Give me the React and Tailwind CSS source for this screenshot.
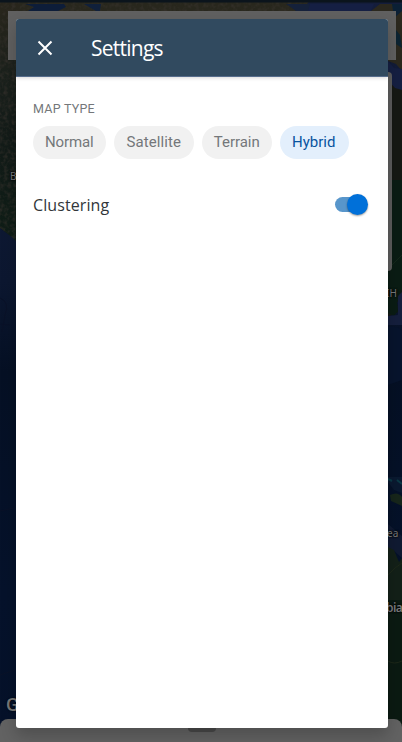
const mapLabel = 'absolute whitespace-nowrap font-["Noto_Sans",sans-serif] text-[#77797a] [text-shadow:0_0_2px_#000,0_0_2px_#000] leading-none';

function MapBackdrop() {
  return (
    <svg className="absolute inset-0" width="402" height="742" viewBox="0 0 402 742">
      <defs>
        <linearGradient id="sea" x1="0" y1="0" x2="0" y2="1">
          <stop offset="0" stopColor="#141d3b" />
          <stop offset="0.38" stopColor="#0c1730" />
          <stop offset="0.5" stopColor="#051024" />
          <stop offset="0.8" stopColor="#05122b" />
          <stop offset="1" stopColor="#051129" />
        </linearGradient>
        <linearGradient id="land" x1="0" y1="0" x2="0" y2="1">
          <stop offset="0" stopColor="#29261c" />
          <stop offset="0.3" stopColor="#1b211c" />
          <stop offset="0.55" stopColor="#131b18" />
          <stop offset="1" stopColor="#0e1d16" />
        </linearGradient>
        <filter id="terrain" x="0" y="0" width="1" height="1" colorInterpolationFilters="sRGB">
          <feTurbulence type="fractalNoise" baseFrequency="0.25" numOctaves="3" seed="4" />
          <feColorMatrix values="0 0 0 0 0.22  0 0 0 0 0.2  0 0 0 0 0.18  1.5 0 0 0 -0.62" />
          <feComposite in2="SourceGraphic" operator="in" result="grain" />
          <feMerge>
            <feMergeNode in="SourceGraphic" />
            <feMergeNode in="grain" />
          </feMerge>
        </filter>
      </defs>
      <rect width="402" height="742" fill="url(#sea)" />
      <g filter="url(#terrain)">
        <path d="M0 0H310L302 11H0Z" fill="#28271d" />
        <path d="M0 0H20V245L13 238L0 228Z" fill="url(#land)" />
      </g>
      <path d="M25 4H64L66 7L58 11H28L34 7Z" fill="#0d1d39" />
      <path d="M84 4L101 4L100 11H96Z" fill="#10203b" />
      <path d="M286 4L292 8L296 11H310V4Z" fill="#15213a" />
      <path d="M310 4H374L371 11H308Z" fill="#151f43" />
      <path d="M371 11L380 4H402V71L396 64L388 61V11Z" fill="#2b281e" />
      <path d="M392 4H402V11L394 18Z" fill="#0b2035" />
      <path d="M396 30L400 35L402 48L396 44Z" fill="#0c2331" />
      <path d="M388 61L394 68L402 69V91L394 90L388 80Z" fill="#151f42" />
      <path d="M388 80L395 88L402 90V292L397 303L398 312L388 317Z" fill="#161914" />
      <path d="M388 180H402V291L397 302L398 311L394 316L388 313Z" fill="#0a1c14" />
      <path d="M388 269L402 255" stroke="#14271a" fill="none" />
      <path d="M398 296L402 292V325H388V316L398 315Z" fill="#151f3d" />
      <path d="M388 327Q398 326 402 331V380L388 385Z" fill="#07142d" />
      <path d="M388 477H402V493L394 490L388 482Z" fill="#0a1930" />
      <path d="M388 479L392 481M397 480L402 484" stroke="#0b3946" strokeWidth="2" />
      <path d="M390 495Q398 491 402 497V506L391 501Z" fill="#17261b" />
      <path d="M388 524L402 536V558L394 551L388 553Z" fill="#101a32" />
      <path d="M388 547L394 550L399 562L402 558V742H388Z" fill="#132018" />
      <path d="M388 600H402V742H388Z" fill="#0b1a12" />
      <path d="M388 575L395 568L402 563M388 661Q394 665 402 661" stroke="#1d2819" fill="none" />
      <path d="M0 298Q10 302 5 315L2 332M0 324L10 325M0 511L14 508M0 675L15 670" stroke="#0a1228" fill="none" />
      <rect width="402" height="2.5" fill="#0b141c" />
    </svg>
  );
}

function Chip({ label, selected, size }) {
  return (
    <button
      className={`flex h-[33px] shrink-0 items-center justify-center rounded-full font-[Roboto,sans-serif] text-[15px] ${size} ${
        selected ? "bg-[#e3effc] text-[#0854a0]" : "bg-[#f1f1f1] text-[#74777a]"
      }`}
    >
      {label}
    </button>
  );
}

export default function App() {
  return (
    <div className='relative h-[742px] w-[402px] overflow-hidden bg-[#051029] px-4 pt-[19px] font-["Open_Sans",sans-serif]'>
      <MapBackdrop />
      <div className="absolute left-2 top-[11px] h-[49px] w-[388px] bg-[#606060]" />
      <div className="absolute left-[360px] top-[72px] h-[199px] w-8 rounded-[4px] bg-[#5c5c5c]" />
      <span className={`${mapLabel} left-[10px] top-[171px] text-[10px]`}>B</span>
      <span className={`${mapLabel} left-[386px] top-[288px] text-[10px]`}>IH</span>
      <span className={`${mapLabel} left-[387px] top-[528px] text-[10px]`}>ea</span>
      <span className={`${mapLabel} left-[386px] top-[602px] text-[12px] font-semibold tracking-[-0.6px]`}>bia</span>
      <span className="absolute left-[6px] top-[695px] font-[Roboto,sans-serif] text-[19px] font-medium leading-none text-[#777] [text-shadow:0_0_2px_#000]">G</span>
      <div className="absolute bottom-0 left-0 h-[23px] w-full rounded-t-[8px] bg-[#626262]" />
      <div className="absolute left-[188px] top-[727px] h-[5px] w-7 rounded-b-sm bg-[#484848]" />

      <section className="relative h-[709px] w-[372px] overflow-hidden rounded-[3px] bg-white shadow-[0_8px_16px_rgba(0,0,0,0.2)]">
        <header className="flex h-[58px] items-center border-b border-[#566c8b] bg-[#314a5f] shadow-[0_1px_4px_rgba(0,0,0,0.16)]">
          <button aria-label="Close" className="ml-[21px] flex size-4 items-center justify-center">
            <svg width="16" height="16" viewBox="0 0 16 16" fill="none" stroke="white" strokeWidth="2">
              <path d="M1.5 1.5L14.5 14.5M14.5 1.5L1.5 14.5" />
            </svg>
          </button>
          <h1 className="ml-[38px] text-[21px] leading-7 tracking-[-0.75px] text-white [font-stretch:92%]">Settings</h1>
        </header>
        <main className="px-[17px] pt-[23px]">
          <h2 className="h-[18px] font-[Roboto,sans-serif] text-[12.5px] leading-[18px] tracking-[0.25px] text-[#74777a]">MAP TYPE</h2>
          <div className="mt-2 flex gap-[8.5px]">
            <Chip label="Normal" size="w-[72.5px] tracking-[-0.1px]" />
            <Chip label="Satellite" size="w-[79.5px] tracking-[0.1px]" />
            <Chip label="Terrain" size="w-[69.5px] tracking-[-0.05px]" />
            <Chip label="Hybrid" selected size="w-[68.5px] tracking-[0px] pr-px" />
          </div>
          <div className="mt-[33px] flex h-6 items-center justify-between">
            <span className="pt-px text-[16px] font-[450] leading-6 tracking-[0.1px] text-[#32363a]">Clustering</span>
            <button role="switch" aria-checked="true" aria-label="Clustering" className="mr-[3px] flex h-[15px] w-[33px] items-center justify-end rounded-full bg-[linear-gradient(to_right,#5896cb_26px,transparent_26px)]">
              <span className="size-[21px] shrink-0 rounded-full bg-[#0070d9] shadow-[0_1px_2px_rgba(0,0,0,0.4)]" />
            </button>
          </div>
        </main>
      </section>
    </div>
  );
}
